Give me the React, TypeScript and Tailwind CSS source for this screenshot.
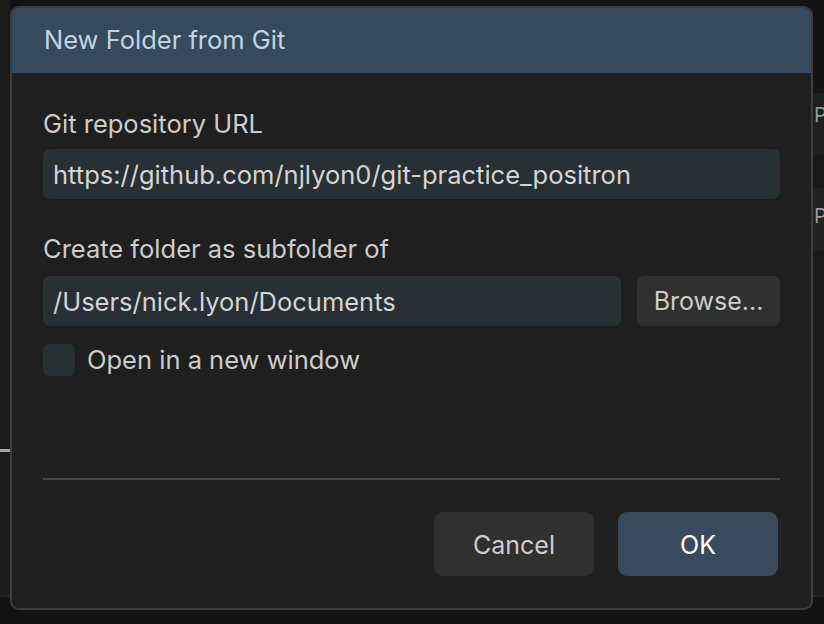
import { useState } from 'react';

export default function App() {
  const [url, setUrl] = useState('https://github.com/njlyon0/git-practice_positron');
  const [parent, setParent] = useState('/Users/nick.lyon/Documents');
  const [newWindow, setNewWindow] = useState(false);

  return (
    <div
      className="relative h-[624px] w-[824px] overflow-hidden bg-[#131313]"
      style={{ fontFamily: 'Inter, "Noto Sans", sans-serif' }}
    >
      {/* workbench behind the modal */}
      <div className="flex h-[597px] border-b-2 border-[#262626]">
        <div className="flex w-[10px] flex-col bg-[#1a1a1a]">
          <div className="h-[449px]" />
          <div className="h-[3px] bg-[#a8a8a8]" />
        </div>
        <div className="flex-1" />
        <div className="flex w-[12px] flex-col">
          <div className="h-[93px] bg-[#141414]" />
          <div className="h-[62px] bg-[#1f1f1f] pl-[2px] pt-[12px] text-[20px] leading-none text-[#9a9a9a]">P</div>
          <div className="h-[33px] bg-[#181818]" />
          <div className="h-[62px] bg-[#222222] pl-[2px] pt-[18px] text-[20px] leading-none text-[#9a9a9a]">P</div>
          <div className="flex-1 bg-[#1b1b1b]" />
        </div>
      </div>

      {/* modal */}
      <div className="absolute left-[10px] top-[6px] flex h-[604px] w-[803px] flex-col overflow-hidden rounded-[9px] border-2 border-[#3e3e3e] bg-[#1f1f1f]">
        <div className="flex h-[65px] items-center bg-[#374a5c] px-[32px] text-[25.5px] text-[#c2d3e3]">
          New Folder from Git
        </div>

        <div className="flex flex-1 flex-col px-[31px] pt-[36px] text-[25.5px] text-[#cccccc]">
          <label className="leading-[30px]">Git repository URL</label>
          <input
            value={url}
            onChange={(e) => setUrl(e.target.value)}
            className="mt-[10px] h-[50px] w-full rounded-[7px] bg-[#293033] px-[10px] text-[25.5px] text-[#d4d4d4] outline-none"
          />

          <label className="mt-[35px] leading-[30px]">Create folder as subfolder of</label>
          <div className="mt-[12px] flex gap-[16px]">
            <input
              value={parent}
              onChange={(e) => setParent(e.target.value)}
              className="h-[50px] flex-1 rounded-[7px] bg-[#293033] px-[10px] text-[25.5px] text-[#d4d4d4] outline-none"
            />
            <button className="h-[50px] w-[143px] rounded-[7px] bg-[#303030] pt-[1px] text-[25px] text-[#cccccc]">
              Browse...
            </button>
          </div>

          <label className="mt-[18px] flex cursor-pointer items-center gap-[12px]">
            <button
              onClick={() => setNewWindow(!newWindow)}
              className="h-[32px] w-[32px] rounded-[6px] bg-[#293033] text-[#cccccc]"
            >
              {newWindow ? '✓' : ''}
            </button>
            <span className="leading-[30px]">Open in a new window</span>
          </label>

          <div className="mt-[102px] h-[2px] bg-[#45454c]" />

          <div className="mt-[32px] flex justify-end gap-[24px] pr-[2px]">
            <button className="h-[64px] w-[160px] rounded-[9px] bg-[#303030] pt-[3px] text-[25px] text-[#cccccc]">
              Cancel
            </button>
            <button className="h-[64px] w-[160px] rounded-[9px] bg-[#384a5c] pt-[3px] text-[25px] text-white">
              OK
            </button>
          </div>
        </div>
      </div>
    </div>
  );
}
